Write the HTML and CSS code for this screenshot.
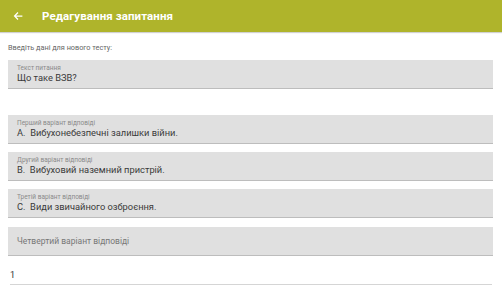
FILE: index.html
```html
<!DOCTYPE html>
<html lang="uk">
<head>
<meta charset="utf-8">
<link rel="stylesheet" href="styles.css">
</head>
<body>
<header class="appbar">
  <svg class="back" width="10" height="10" viewBox="0 0 16 16"><path d="M15 8H3M8 2.5L2.5 8 8 13.5" fill="none" stroke="#fff" stroke-width="2"/></svg>
  <span class="title">Редагування запитання</span>
</header>
<main class="content">
  <p class="intro">Введіть дані для нового тесту:</p>
  <div class="field first">
    <span class="label">Текст питання</span>
    <span class="value">Що таке ВЗВ?</span>
  </div>
  <div class="field second">
    <span class="label">Перший варіант відповіді</span>
    <span class="value">А.&nbsp; Вибухонебезпечні залишки війни.</span>
  </div>
  <div class="field">
    <span class="label">Другий варіант відповіді</span>
    <span class="value">В.&nbsp; Вибуховий наземний пристрій.</span>
  </div>
  <div class="field">
    <span class="label">Третій варіант відповіді</span>
    <span class="value">С.&nbsp; Види звичайного озброєння.</span>
  </div>
  <div class="field empty">
    <span class="placeholder">Четвертий варіант відповіді</span>
  </div>
  <div class="plain">1</div>
</main>
</body>
</html>
```
FILE: styles.css
```css
html, body {
  margin: 0;
  padding: 0;
  background: #ffffff;
  font-family: Roboto, "Liberation Sans", sans-serif;
}
.appbar {
  height: 32px;
  background: #afb42b;
  display: flex;
  align-items: center;
  box-shadow: 0 1px 1px rgba(0,0,0,0.18);
  position: relative;
}
.back {
  margin-left: 13px;
  margin-right: 19px;
}
.title {
  color: #ffffff;
  font-weight: 700;
  font-size: 11.5px;
  letter-spacing: 0.1px;
}
.content {
  padding: 0 9px 0 8px;
  display: flex;
  flex-direction: column;
}
.intro {
  margin: 11px 0 0 0;
  font-size: 7.3px;
  color: #666;
  line-height: 10px;
}
.field {
  margin-top: 8px;
  height: 28px;
  background: #e0e0e0;
  border-bottom: 1px solid #bdbdbd;
  display: flex;
  flex-direction: column;
  justify-content: center;
  padding: 0 9px;
  box-sizing: content-box;
}
.field.first { margin-top: 7px; }
.field.second { margin-top: 26px; }
.label {
  font-size: 6.5px;
  line-height: 8px;
  color: #8a8a8a;
}
.value {
  font-size: 9.3px;
  line-height: 12px;
  color: #3a3a3a;
}
.field.empty { margin-top: 9px; }
.placeholder {
  font-size: 8.5px;
  color: #777;
}
.plain {
  margin: 14px 1px 0 2px;
  padding: 0 0 3px 0;
  font-size: 9px;
  line-height: 11px;
  color: #333;
  border-bottom: 1px solid #d5d5d5;
}
```
